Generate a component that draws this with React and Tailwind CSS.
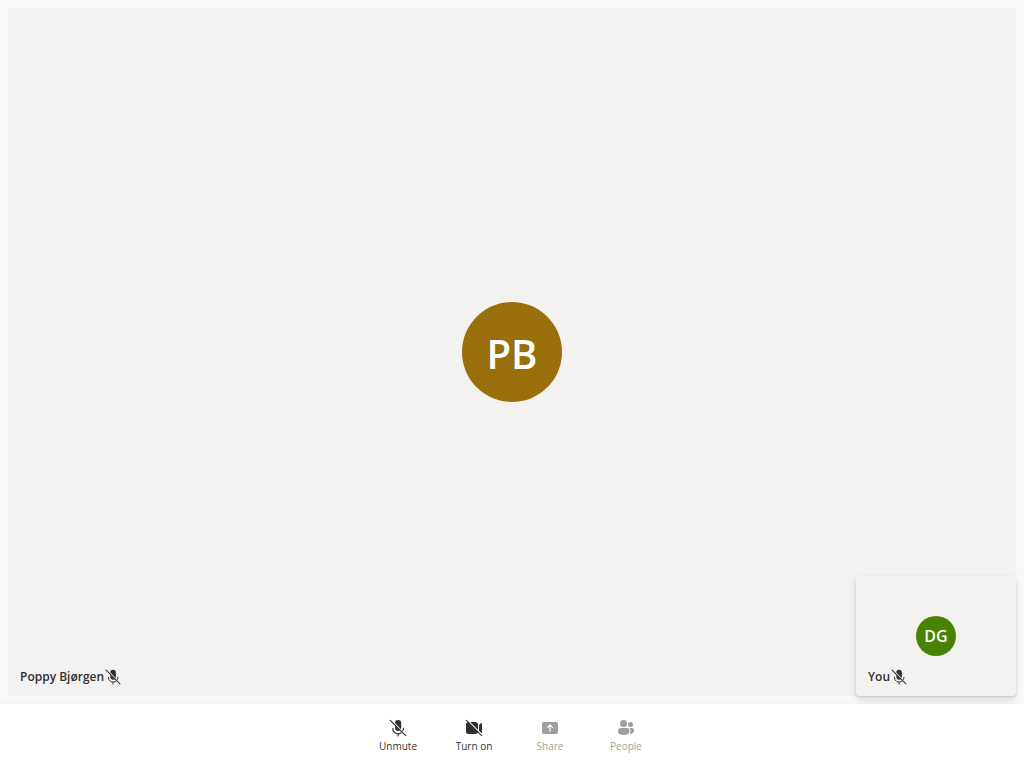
function MicOffIcon({ className }) {
  return (
    <svg viewBox="0 0 20 20" className={className} fill="none" stroke="currentColor" strokeWidth="1.1" strokeLinecap="round" aria-hidden="true">
      <path d="M7 5.1A3.1 3.1 0 0 1 13.2 5v5c0 .4 0 .8-.2 1.2L7 5.1Z" fill="currentColor" stroke="none" />
      <path d="M7 7.5V10a3.1 3.1 0 0 0 4.9 2.5L7 7.5Z" fill="currentColor" stroke="none" />
      <path d="M4.8 10.2a5.3 5.3 0 0 0 8.4 4.6M15.5 10.2c0 1-.3 1.9-.8 2.8M10.1 15.6V18" />
      <path d="m2.3 2.3 15.4 15.4" strokeWidth="1.2" />
    </svg>
  );
}

function VideoOffIcon({ className }) {
  return (
    <svg viewBox="0 0 20 20" className={className} fill="currentColor" aria-hidden="true">
      <path d="M4.5 4h7A2.5 2.5 0 0 1 14 6.5v7a2.5 2.5 0 0 1-2.5 2.5h-7A2.5 2.5 0 0 1 2 13.5v-7A2.5 2.5 0 0 1 4.5 4Z" />
      <path d="m15 6.9 1.8-1.7c.5-.4 1.2-.1 1.2.6v8.4c0 .7-.7 1-1.2.6L15 13.1V6.9Z" />
      <path d="m3.4 2.2 15 15" fill="none" stroke="white" strokeWidth="1.3" />
      <path d="m2.3 2.3 15.4 15.4" fill="none" stroke="currentColor" strokeWidth="1.1" strokeLinecap="round" />
    </svg>
  );
}

function ShareIcon({ className }) {
  return (
    <svg viewBox="0 0 20 20" className={className} aria-hidden="true">
      <rect x="2" y="4" width="16" height="12" rx="2" fill="currentColor" />
      <path d="M10 13V7M7.5 9.3 10 6.8l2.5 2.5" fill="none" stroke="white" strokeWidth="1.2" strokeLinecap="round" strokeLinejoin="round" />
    </svg>
  );
}

function PeopleIcon({ className }) {
  return (
    <svg viewBox="0 0 20 20" className={className} fill="currentColor" aria-hidden="true">
      <circle cx="7.5" cy="5.5" r="3.5" />
      <circle cx="14.5" cy="6.5" r="2.5" />
      <path d="M5 10h5.5a3 3 0 0 1 3 3c0 2.6-2.2 4-5.7 4S2 15.6 2 13a3 3 0 0 1 3-3Z" />
      <path d="M13.3 10H16a2 2 0 0 1 2 2.2c0 2.4-1.7 3.8-4.4 3.7.6-.9.9-1.9.9-3 0-1.1-.4-2.1-1.2-2.9Z" />
    </svg>
  );
}

const controls = [
  { label: "Unmute", Icon: MicOffIcon },
  { label: "Turn on", Icon: VideoOffIcon },
  { label: "Share", Icon: ShareIcon, disabled: true },
  { label: "People", Icon: PeopleIcon, disabled: true },
];

function NameLabel({ children }) {
  return (
    <div className="absolute bottom-2 left-2 flex items-center px-1 text-xs/[22px] font-semibold">
      <span>{children}</span>
      <MicOffIcon className="size-[18px]" />
    </div>
  );
}

export default function App() {
  return (
    <div className="flex h-screen flex-col bg-[#faf9f8] font-['Open_Sans','Noto_Sans',sans-serif] text-[#323130]">
      <main className="flex min-h-0 flex-1 p-2">
        <section aria-label="Poppy Bjørgen" className="relative flex flex-1 items-center justify-center rounded bg-[#f3f2f1]">
          <div className="flex size-[100px] items-center justify-center rounded-full bg-[#986f0b] pt-1 text-[40px] font-semibold text-white">
            PB
          </div>
          <NameLabel>Poppy Bjørgen</NameLabel>
          <section
            aria-label="You"
            className="absolute right-0 bottom-0 flex h-30 w-40 items-center justify-center rounded bg-[#f3f2f1] shadow-[0_3px_7px_rgba(0,0,0,0.13),0_1px_2px_rgba(0,0,0,0.11)]"
          >
            <div className="flex size-10 items-center justify-center rounded-full bg-[#498205] text-base font-semibold text-white">
              DG
            </div>
            <NameLabel>You</NameLabel>
          </section>
        </section>
      </main>
      <footer className="relative flex h-16 shrink-0 justify-center bg-white shadow-[0_0_7px_rgba(0,0,0,0.05)]">
        {controls.map(({ label, Icon, disabled }) => (
          <button
            key={label}
            type="button"
            disabled={disabled}
            className="flex w-19 flex-col items-center justify-center text-[10px]/4 disabled:text-[#a19f9d]"
          >
            <Icon className="size-5" />
            <span>{label}</span>
          </button>
        ))}
      </footer>
    </div>
  );
}
